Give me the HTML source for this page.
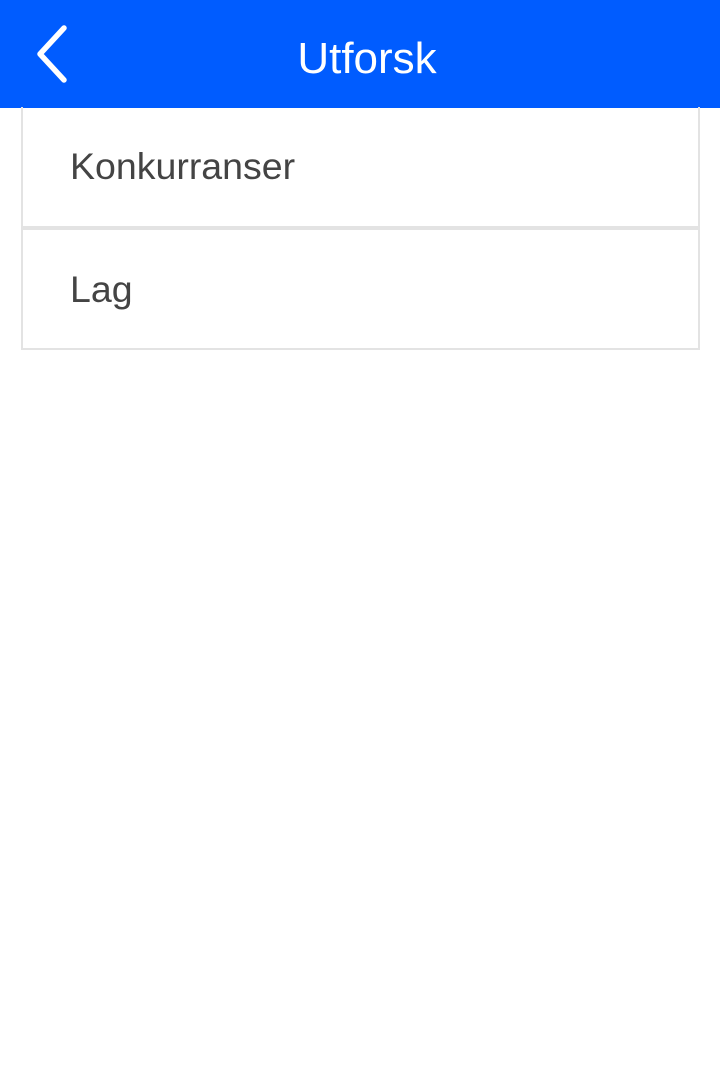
<!DOCTYPE html>
<html><head><style>
body{margin:0;width:720px;height:1072px;background:#fff;font-family:"Liberation Sans",sans-serif;overflow:hidden;position:relative}
.h{position:absolute;left:0;top:0;width:720px;height:108px;background:#005cff}
.t{position:absolute;left:0;width:734px;top:0;height:118px;line-height:118px;text-align:center;color:#fff;font-size:44px}
.c{position:absolute;left:21px;width:675px;height:117px;border:2px solid #e3e3e3;color:#444;font-size:37.5px;line-height:119px;box-sizing:content-box}
.c span{position:absolute;left:47px}
</style></head><body>
<div class="h"><div class="t">Utforsk</div>
<svg style="position:absolute;left:0;top:0" width="100" height="108"><path d="M64 28 L40 54 L64 80" fill="none" stroke="#fff" stroke-width="5.5" stroke-linecap="round" stroke-linejoin="round"/></svg></div>
<div class="c" style="top:107px;border-top:none;height:119px"><span>Konkurranser</span></div>
<div class="c" style="top:228px;height:118px"><span>Lag</span></div>
</body></html>
